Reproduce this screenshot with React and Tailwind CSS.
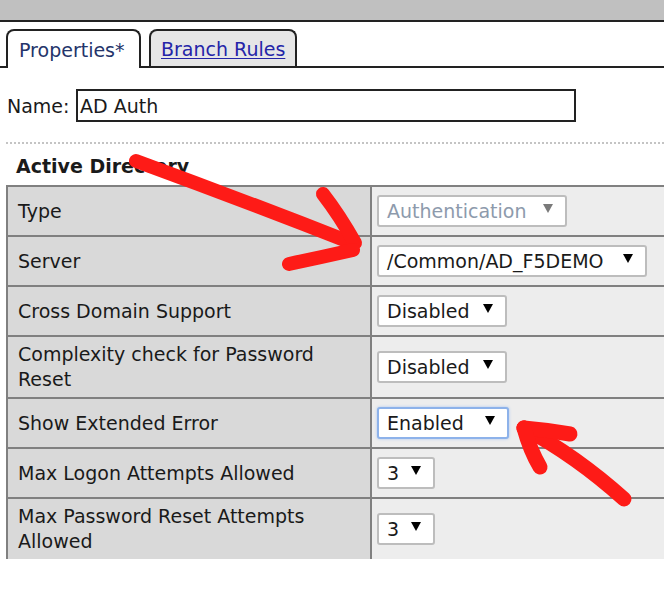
import React from "react";

const ROWS = [
  { label: "Type", value: "Authentication", width: "w-[190px]", disabled: true },
  { label: "Server", value: "/Common/AD_F5DEMO", width: "w-[270px]" },
  { label: "Cross Domain Support", value: "Disabled", width: "w-[130px]" },
  {
    label: ["Complexity check for Password", "Reset"],
    value: "Disabled",
    width: "w-[130px]",
    tall: true,
  },
  { label: "Show Extended Error", value: "Enabled", width: "w-[132px]", focused: true },
  { label: "Max Logon Attempts Allowed", value: "3", width: "w-[58px]" },
  {
    label: ["Max Password Reset Attempts", "Allowed"],
    value: "3",
    width: "w-[58px]",
    tall: true,
    last: true,
  },
];

const Caret = ({ muted }) => (
  <svg width="10" height="9" viewBox="0 0 10 9" className="-translate-y-[3px] shrink-0">
    <polygon points="0,0 10,0 5,9" fill={muted ? "#7a7a7a" : "#000"} />
  </svg>
);

const FakeSelect = ({ value, width, disabled, focused }) => {
  const border = focused
    ? "border-[#8db2ea] shadow-[0_0_3px_#a9c6f2]"
    : "border-[#bdbdbd]";

  return (
    <div
      className={`flex h-[32px] items-center justify-between rounded-[3px] border-2 bg-white pl-[8px] pr-[12px] ${width} ${border}`}
    >
      <span className={disabled ? "text-[#8d9aac]" : "text-[#1a1a1a]"}>{value}</span>
      <Caret muted={disabled} />
    </div>
  );
};

const Arrows = () => (
  <svg
    width="664"
    height="594"
    viewBox="0 0 664 594"
    className="pointer-events-none absolute left-0 top-0"
    fill="none"
    stroke="#fe1b17"
    strokeLinecap="round"
    strokeLinejoin="round"
  >
    <g strokeWidth="14">
      <path d="M136 161 Q 245 201 352 243" />
      <path d="M323 194 Q 340 216 355 243" />
      <path d="M289 264 Q 322 257 353 250" />
    </g>
    <g strokeWidth="15">
      <path d="M624 499 Q 576 456 524 428" />
      <path d="M524 428 Q 548 430 570 434" />
      <path d="M524 428 Q 530 450 540 467" />
    </g>
  </svg>
);

export default function App() {
  return (
    <div className="relative h-[594px] w-[664px] overflow-hidden bg-white font-['DejaVu_Sans',sans-serif] text-[19px] leading-[22px] text-[#1a1a1a]">
      <div className="h-[22px] border-b-2 border-[#222] bg-[#c0c0c0]" />

      <div className="mt-[7px] flex items-end gap-[8px] border-b-2 border-[#222] pl-[6px]">
        <div className="relative z-10 -mb-[2px] flex h-[39px] w-[135px] items-center rounded-t-[8px] border-2 border-b-0 border-[#222] bg-white pl-[11px] text-[#24346a]">
          Properties*
        </div>
        <div className="flex h-[37px] w-[148px] items-center rounded-t-[8px] border-2 border-b-0 border-[#222] bg-[#e6e6e6] pl-[10px]">
          <span className="text-[#2424a8] underline underline-offset-2">Branch Rules</span>
        </div>
      </div>

      <div className="mt-[21px] flex items-center">
        <span className="w-[76px] pl-[7px]">Name:</span>
        <div className="flex h-[33px] w-[500px] items-center border-2 border-[#222] pl-[2px]">
          AD Auth
        </div>
      </div>

      <div className="ml-[6px] mt-[20px] border-t-2 border-dotted border-[#c4c4c4]" />

      <h2 className="mt-[11px] pl-[16px] font-bold">Active Directory</h2>

      <div className="ml-[6px] mt-[8px] border-l-2 border-t-2 border-[#808080]">
        {ROWS.map((row, index) => (
          <div
            key={index}
            className={`flex ${row.tall ? "h-[60px]" : "h-[48px]"} ${
              row.last ? "" : "box-content border-b-2 border-[#808080]"
            }`}
          >
            <div className="flex w-[364px] items-center border-r-2 border-[#808080] bg-[#d9d9d9] pl-[10px] leading-[25px]">
              {Array.isArray(row.label) ? (
                <span>
                  {row.label[0]}
                  <br />
                  {row.label[1]}
                </span>
              ) : (
                <span>{row.label}</span>
              )}
            </div>
            <div className="flex flex-1 items-center bg-[#ededed] pl-[5px]">
              <FakeSelect
                value={row.value}
                width={row.width}
                disabled={row.disabled}
                focused={row.focused}
              />
            </div>
          </div>
        ))}
      </div>

      <Arrows />
    </div>
  );
}
